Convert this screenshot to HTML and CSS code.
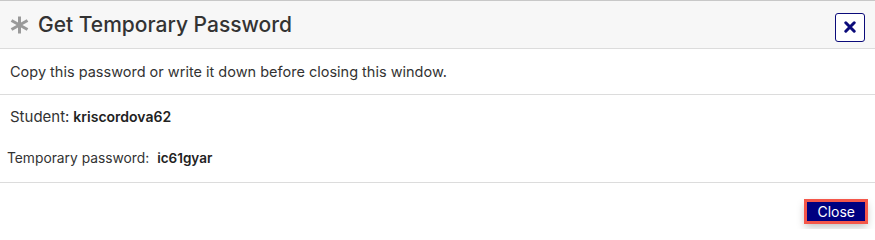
FILE: index.html
```html
<!DOCTYPE html>
<html lang="en">
<head>
<meta charset="utf-8">
<title>Get Temporary Password</title>
<link rel="stylesheet" href="styles.css">
</head>
<body>
<div class="modal">
  <div class="modal-header">
    <h1 class="modal-title">
      <svg class="title-icon" width="19" height="18" viewBox="0 0 19 18"><g stroke="#9a9a9a" stroke-width="3" stroke-linecap="butt"><path d="M9.5 0.5 V17.5"/><path d="M1.5 4.5 L17.5 13.5"/><path d="M17.5 4.5 L1.5 13.5"/></g></svg>
      <span>Get Temporary Password</span>
    </h1>
    <button class="icon-close" aria-label="Close">
      <svg width="12" height="12" viewBox="0 0 12 12"><path d="M1.8 1.8 L10.2 10.2 M10.2 1.8 L1.8 10.2" stroke="#0b0b7a" stroke-width="3" stroke-linecap="round"/></svg>
    </button>
  </div>
  <div class="modal-note">Copy this password or write it down before closing this window.</div>
  <div class="modal-body">
    <div class="row student"><span class="lbl-s">Student:</span> <strong>kriscordova62</strong></div>
    <div class="row password"><span class="lbl-p">Temporary password:</span>&nbsp; <strong>ic61gyar</strong></div>
  </div>
  <div class="modal-footer">
    <button class="btn-close">Close</button>
  </div>
</div>
</body>
</html>
```
FILE: styles.css
```css
* { box-sizing: border-box; }
html, body { margin: 0; padding: 0; background: #fff; }
body {
  font-family: Inter, "Noto Sans", sans-serif;
  color: #333;
  width: 875px;
  height: 229px;
  overflow: hidden;
}
.modal {
  border-top: 1px solid #c8c8c8;
}
.modal-header {
  height: 48px;
  background: #f7f7f7;
  border-bottom: 1px solid #dcdcdc;
  display: flex;
  align-items: center;
  justify-content: space-between;
  padding: 0 10px 0 10px;
}
.modal-title {
  margin: 0;
  font-size: 21px;
  font-weight: 500;
  color: #333;
  display: flex;
  align-items: center;
}
.title-icon {
  margin-right: 9px;
  margin-top: 1px;
}
.icon-close {
  width: 30px;
  height: 29px;
  border: 1px solid #0b0b7a;
  border-radius: 3px;
  background: #fff;
  display: flex;
  align-items: center;
  justify-content: center;
  padding: 0;
  margin-top: 5px;
}
.modal-note {
  height: 46px;
  display: flex;
  align-items: center;
  padding: 0 10px;
  font-size: 14.5px;
  border-bottom: 1px solid #dcdcdc;
}
.modal-body {
  height: 88px;
  border-bottom: 1px solid #dcdcdc;
  font-size: 14px;
  padding-top: 12px;
}
.row strong { font-weight: 600; color: #222; }
.lbl-s { font-size: 15px; }
.lbl-p { font-size: 13.8px; }
.password strong { font-size: 13.5px; }
.student { padding-left: 10px; }
.password { padding-left: 7px; margin-top: 23px; }
.modal-footer {
  display: flex;
  justify-content: flex-end;
  padding: 19px 10px 0 0;
}
.btn-close {
  background: #000080;
  color: #fff;
  border: none;
  font-family: Inter, "Noto Sans", sans-serif;
  font-size: 14px;
  font-weight: 400;
  padding: 2px 10px 2px 10px;
  height: 19px;
  line-height: 15px;
  box-shadow: 0 0 0 3px #f4574a, 0 4px 8px 2px rgba(0,0,0,0.25);
  border-radius: 0;
}
```
